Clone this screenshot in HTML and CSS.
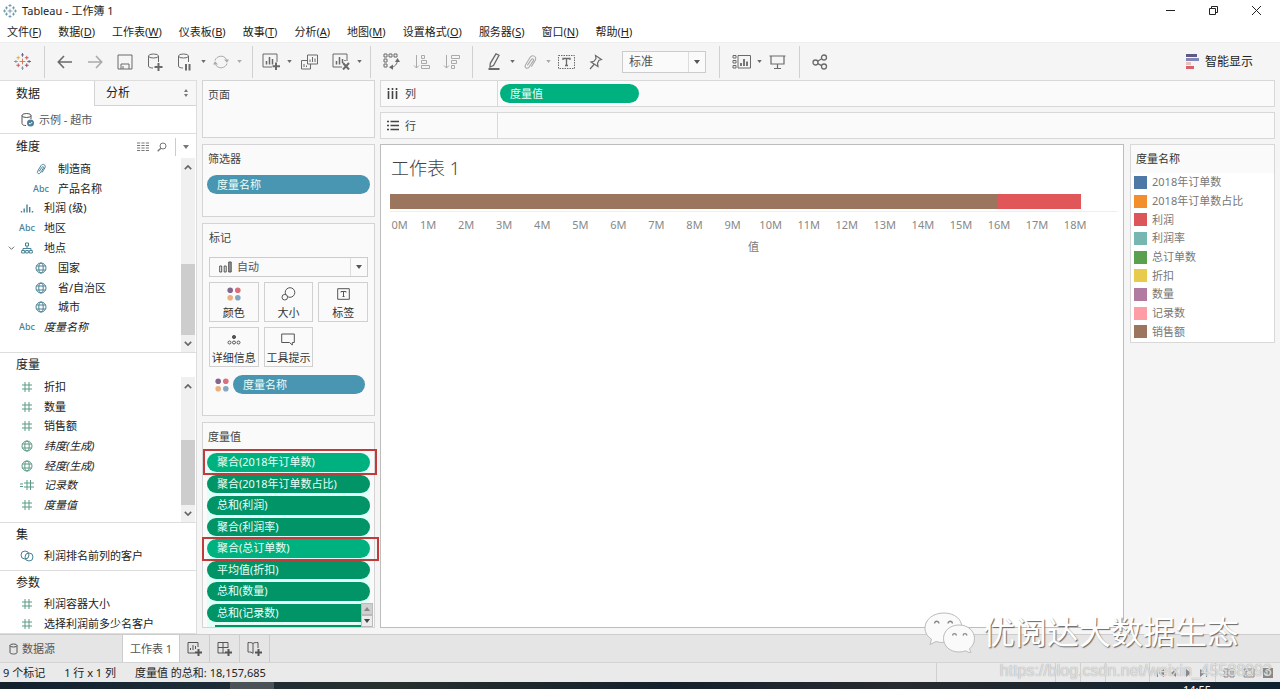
FILE: index.html
```html
<!DOCTYPE html>
<html lang="zh-CN">
<head>
<meta charset="utf-8">
<meta name="viewport" content="width=device-width, initial-scale=1">
<title>Tableau - 工作簿 1</title>
<link rel="stylesheet" href="styles.css">
</head>
<body>
<svg class="defs" aria-hidden="true">
  <symbol id="i-hash" viewBox="0 0 12 12"><path d="M4 1v10M8 1v10M1 4h10M1 8h10"/></symbol>
  <symbol id="i-globe" viewBox="0 0 12 12"><circle cx="6" cy="6" r="5"/><ellipse cx="6" cy="6" rx="2.2" ry="5"/><path d="M1.5 4h9M1.5 8h9"/></symbol>
  <symbol id="i-clip" viewBox="0 0 12 12"><path d="M4 8.500 7 4.200c.8-1.200 2.200-.4 1.500.8L5.300 9.800c-1.400 1.900-3.800.4-2.600-1.700L6 2.600C7.700 0 11.300 1.800 9.900 4.800L7 9.500"/></symbol>
  <symbol id="i-bars" viewBox="0 0 12 12"><path d="M.5 9v1.500M3.200 6.500v4M6 2.500v8M8.700 5v5.500M11.500 9v1.500" stroke-width="1.400"/></symbol>
  <symbol id="i-tree" viewBox="0 0 12 12"><path d="M4.500 1h3v3h-3zM6 4v2.500M2 8.500v-2h8v2M.7 8.500h3V11h-3zM4.700 8.500h2.600V11H4.700zM8.300 8.500h3V11h-3z"/></symbol>
  <symbol id="i-venn" viewBox="0 0 14 12"><circle cx="5" cy="5" r="4"/><circle cx="9" cy="7" r="4"/></symbol>
  <symbol id="i-eqhash" viewBox="0 0 14 12"><path d="M0 5h3M0 7.500h3M7 1v10M10.500 1v10M4 4h10M4 8h10"/></symbol>
  <symbol id="i-chev" viewBox="0 0 10 6"><path d="M1 1l4 4 4-4"/></symbol>
  <symbol id="i-caret" viewBox="0 0 6 4"><path class="solid" d="M0 0h6L3 4z"/></symbol>
  <symbol id="i-dots" viewBox="0 0 14 14"><circle cx="3.200" cy="3.200" r="2.800" fill="#83668e"/><circle cx="10.800" cy="3.200" r="2.800" fill="#d9707c"/><circle cx="3.200" cy="10.800" r="2.800" fill="#ecb07e"/><circle cx="10.800" cy="10.800" r="2.800" fill="#86a7bf"/></symbol>
  <symbol id="i-star" viewBox="0 0 18 18">
    <path d="M9 6v6M6 9h6M9 0v4M7 2h4M9 14v4M7 16h4M0 9h4M2 7v4M14 9h4M16 7v4M4.500 3v4M2.500 5h4M13.500 3v4M11.500 5h4M4.500 11v4M2.500 13h4M13.500 11v4M11.500 13h4"/></symbol>
</svg>

<div class="app">
  <header class="titlebar">
    <svg class="app-icon ico" viewBox="0 0 18 18"><use href="#i-star"/></svg>
    <h1>Tableau - 工作簿 1</h1>
    <div class="window-controls">
      <button aria-label="最小化"><svg class="ico" width="11" height="11" viewBox="0 0 11 11"><path d="M1 5.500h9"/></svg></button>
      <button aria-label="还原"><svg class="ico" width="11" height="11" viewBox="0 0 11 11"><path d="M1.500 3.500h6v6h-6zM3.500 3.500v-2h6v6h-2"/></svg></button>
      <button aria-label="关闭"><svg class="ico" width="11" height="11" viewBox="0 0 11 11"><path d="M1 1l9 9M10 1l-9 9"/></svg></button>
    </div>
  </header>

  <nav class="menubar">
    <button>文件(<u>F</u>)</button><button>数据(<u>D</u>)</button><button>工作表(<u>W</u>)</button><button>仪表板(<u>B</u>)</button><button>故事(<u>T</u>)</button><button>分析(<u>A</u>)</button><button>地图(<u>M</u>)</button><button>设置格式(<u>O</u>)</button><button>服务器(<u>S</u>)</button><button>窗口(<u>N</u>)</button><button>帮助(<u>H</u>)</button>
  </nav>

  <div class="toolbar">
    <div class="group group-logo">
      <button class="tool" aria-label="起始页"><svg class="ico" width="17" height="17" viewBox="0 0 18 18">
        <path stroke="#d9744f" d="M9 6v6M6 9h6"/><path stroke="#5b6591" d="M9 0v4M7.500 2h3M14 9h4M16 7.500v3"/><path stroke="#7d98a6" d="M9 14v4M7.500 16h3M0 9h4M2 7.500v3"/><path stroke="#e0b04e" d="M4.500 3v4M2.500 5h4"/><path stroke="#c9525b" d="M4.500 11v4M2.500 13h4M13.500 3v4M11.500 5h4"/><path stroke="#8a4a68" d="M13.500 11v4M11.500 13h4"/></svg></button>
    </div>
    <div class="group group-file">
      <button class="tool" aria-label="撤消"><svg class="ico bold" width="16" height="14" viewBox="0 0 16 14"><path d="M15 7H1.500M7 1L1.300 7 7 13"/></svg></button>
      <button class="tool dim" aria-label="重做"><svg class="ico bold" width="16" height="14" viewBox="0 0 16 14"><path d="M1 7h13.500M9 1l5.700 6L9 13"/></svg></button>
      <button class="tool" aria-label="保存"><svg class="ico" width="16" height="16" viewBox="0 0 16 16"><path d="M1 1h14v14H1zM4 15v-5h8v5M6 12v3"/></svg></button>
      <button class="tool" aria-label="新建数据源"><svg class="ico" width="16" height="18" viewBox="0 0 16 18"><ellipse cx="6.500" cy="3" rx="5" ry="2"/><path d="M1.500 3v10c0 1.400 2 2 4.500 2M11.500 3v6"/><path class="heavy" d="M11.500 10v8M7.500 14h8"/></svg></button>
      <button class="tool" aria-label="暂停自动更新"><svg class="ico" width="16" height="18" viewBox="0 0 16 18"><ellipse cx="6.500" cy="3" rx="5" ry="2"/><path d="M1.500 3v10c0 1.400 2 2 4.500 2M11.500 3v6"/><path class="heavy" d="M9 11v6.500M12.500 11v6.500"/></svg></button>
      <button class="drop" aria-label="更新选项"><svg class="ico" width="5" height="3"><use href="#i-caret"/></svg></button>
      <button class="tool dim" aria-label="刷新"><svg class="ico" width="16" height="16" viewBox="0 0 16 16"><path d="M2 6.500C3.500 1.500 11 .5 13.500 5.500M14 9.500C12.500 14.500 5 15.500 2.500 10.500"/><path class="solid" d="M11 5.500h5l-2 3.300zM0 10.500h5L2 7.200z"/></svg></button>
      <button class="drop dim" aria-label="刷新选项"><svg class="ico" width="5" height="3"><use href="#i-caret"/></svg></button>
    </div>
    <div class="group group-sheets">
      <button class="tool" aria-label="新建工作表"><svg class="ico" width="18" height="17" viewBox="0 0 18 17"><path d="M15 9V1H1v13h9"/><path d="M4.500 11.500V8M7.500 11.500V4M10.500 11.500V6" stroke-width="1.500"/><path class="heavy" d="M14 9.500v7.500M10.500 13.200h7.500"/></svg></button>
      <button class="drop" aria-label="新建选项"><svg class="ico" width="5" height="3"><use href="#i-caret"/></svg></button>
      <button class="tool" aria-label="复制"><svg class="ico" width="17" height="16" viewBox="0 0 17 16"><path d="M6.500 1h10v9h-10zM6.500 6.500h-6V15h9v-5M9 8V5.500M11.500 8V3M14 8V4.500M3 13v-3M5.500 13v-1.500"/></svg></button>
      <button class="tool" aria-label="清除"><svg class="ico" width="18" height="17" viewBox="0 0 18 17"><path d="M15 8V1H1v13h9"/><path d="M4.500 11.500V8M7.500 11.500V4M10.500 10V6M13 8V7" stroke-width="1.500"/><path class="heavy" d="M11 10l6 6.500M17 10l-6 6.500"/></svg></button>
      <button class="drop" aria-label="清除选项"><svg class="ico" width="5" height="3"><use href="#i-caret"/></svg></button>
    </div>
    <div class="group">
      <button class="tool" aria-label="交换行和列"><svg class="ico" width="17" height="17" viewBox="0 0 17 17"><path d="M1 1h3v3H1zM6 1h3v3H6zM11 1h3v3h-3zM1 6h3v3H1zM1 11h3v3H1zM14.500 7c0 4-3 7-6.500 7.500"/><path class="solid" d="M12 9l2.500-4L17 9zM10 11.500l-4 2.700 4 2.500z"/></svg></button>
      <button class="tool dim" aria-label="升序排序"><svg class="ico" width="17" height="16" viewBox="0 0 17 16"><path d="M3.500 1v13M1 11.500L3.500 14 6 11.500M8.500 1.500h3v3h-3zM8.500 6.500h5v3h-5zM8.500 11.500h8v3h-8z"/></svg></button>
      <button class="tool dim" aria-label="降序排序"><svg class="ico" width="17" height="16" viewBox="0 0 17 16"><path d="M3.500 1v13M1 11.500L3.500 14 6 11.500M8.500 1.500h8v3h-8zM8.500 6.500h5v3h-5zM8.500 11.500h3v3h-3z"/></svg></button>
    </div>
    <div class="group group-format">
      <button class="tool" aria-label="突出显示"><svg class="ico" width="14" height="17" viewBox="0 0 14 17"><path d="M9 .8l3 1.400-5.500 10.300L3 14l.3-3.700z" stroke-width="1.300"/><path class="heavy" d="M1.500 16h11"/></svg></button>
      <button class="drop" aria-label="突出显示选项"><svg class="ico" width="5" height="3"><use href="#i-caret"/></svg></button>
      <button class="tool dim" aria-label="分组成员"><svg class="ico thin" width="16" height="16"><use href="#i-clip"/></svg></button>
      <button class="drop dim" aria-label="分组选项"><svg class="ico" width="5" height="3"><use href="#i-caret"/></svg></button>
      <button class="tool" aria-label="显示标记标签"><svg class="ico" width="17" height="16" viewBox="0 0 17 16"><path d="M.5 1.500h16v13H.5z" stroke-dasharray="1.500 1"/><path d="M5 6V4.500h7V6M8.500 4.500v7M7 11.500h3" stroke-width="1.300"/></svg></button>
      <button class="tool" aria-label="固定轴"><svg class="ico" width="14" height="16" viewBox="0 0 14 16"><path d="M6.500 1.500l6 4-2.500.8-1.500 3 .5 3.200L2 8l3-.7 2-2.800zM5 10.500L1 15" stroke-width="1.200"/></svg></button>
      <label class="select fit"><select aria-label="适合"><option>标准</option></select><svg class="ico" width="6" height="4"><use href="#i-caret"/></svg></label>
    </div>
    <div class="group group-show">
      <button class="tool" aria-label="显示或隐藏功能区"><svg class="ico" width="19" height="16" viewBox="0 0 19 16"><path d="M1 1.500h3v2.500H1zM1 6.500h3V9H1zM1 11.500h3V14H1zM6 1.500h12.500V14H6z"/><path d="M9 12V9M12 12V5M15 12V7.500" stroke-width="1.800"/></svg></button>
      <button class="drop" aria-label="功能区选项"><svg class="ico" width="5" height="3"><use href="#i-caret"/></svg></button>
      <button class="tool" aria-label="演示模式"><svg class="ico" width="17" height="16" viewBox="0 0 17 16"><path d="M.5 2h16M2 2v8h13V2M8.500 10v4.500M5 14.500h7" stroke-width="1.200"/></svg></button>
    </div>
    <div class="group group-last">
      <button class="tool" aria-label="共享"><svg class="ico" width="16" height="16" viewBox="0 0 16 16"><g stroke-width="1.300"><circle cx="3.500" cy="8.500" r="2.500"/><circle cx="12" cy="3.500" r="2.500"/><circle cx="12" cy="12.500" r="2.500"/><path d="M5.700 7.200l4-2.400M5.700 9.700l4 2"/></g></svg></button>
    </div>
    <button class="show-me"><svg width="14" height="15" viewBox="0 0 14 15"><path fill="#5f5a85" d="M0 0h11v3H0z"/><path fill="#8387b8" d="M0 4h13v3H0z"/><path fill="#eec0bd" d="M0 8h5v3H0z"/><path fill="#d8606b" d="M0 12h8v3H0z"/></svg>智能显示</button>
  </div>

  <main class="workspace">
    <aside class="sidebar">
      <div class="side-tabs">
        <button class="side-tab active">数据</button>
        <button class="side-tab">分析<svg class="ico" width="6" height="8" viewBox="0 0 6 8"><path class="solid" d="M1 3h4L3 0zM1 5h4L3 8z"/></svg></button>
      </div>
      <a href="#" class="source"><svg class="ico" width="13" height="14" viewBox="0 0 13 14"><ellipse cx="5.500" cy="2.500" rx="4.500" ry="2"/><path d="M1 2.500v8c0 1.500 2 2 4 2M10 2.500V6"/><circle cx="9.500" cy="10" r="3.500" fill="#4f7f9b" stroke="none"/><path stroke="#fff" d="M8 10l1.200 1.200L11.200 9"/></svg>示例 - 超市</a>

      <section class="panel dims">
        <header><h2>维度</h2>
          <button aria-label="查看数据"><svg class="ico" width="12" height="10" viewBox="0 0 12 10"><path d="M0 1h12M0 3.500h12M0 6h12M0 8.500h12" stroke-dasharray="3.200 1.200"/></svg></button>
          <button aria-label="查找字段"><svg class="ico" width="10" height="10" viewBox="0 0 10 10"><circle cx="6" cy="4" r="3"/><path d="M3.800 6.200L.7 9.300" stroke-width="1.400"/></svg></button>
          <button class="more" aria-label="维度菜单"><svg class="ico" width="6" height="4"><use href="#i-caret"/></svg></button>
        </header>
        <div class="scroll">
          <ul>
            <li class="child"><svg class="ico" width="12" height="12"><use href="#i-clip"/></svg>制造商</li>
            <li class="child"><b>Abc</b>产品名称</li>
            <li><svg class="ico" width="12" height="12"><use href="#i-bars"/></svg>利润 (级)</li>
            <li><b>Abc</b>地区</li>
            <li><button class="twist" aria-label="折叠"><svg class="ico" width="7" height="4"><use href="#i-chev"/></svg></button><svg class="ico" width="12" height="12"><use href="#i-tree"/></svg>地点</li>
            <li class="child"><svg class="ico" width="12" height="12"><use href="#i-globe"/></svg>国家</li>
            <li class="child"><svg class="ico" width="12" height="12"><use href="#i-globe"/></svg>省/自治区</li>
            <li class="child"><svg class="ico" width="12" height="12"><use href="#i-globe"/></svg>城市</li>
            <li><b>Abc</b><i>度量名称</i></li>
          </ul>
          <div class="bar"><svg class="ico up" width="8" height="5"><use href="#i-chev"/></svg><span class="thumb"></span><svg class="ico" width="8" height="5"><use href="#i-chev"/></svg></div>
        </div>
      </section>

      <section class="panel meas">
        <header><h2>度量</h2></header>
        <div class="scroll">
          <ul>
            <li><svg class="ico" width="12" height="12"><use href="#i-hash"/></svg>折扣</li>
            <li><svg class="ico" width="12" height="12"><use href="#i-hash"/></svg>数量</li>
            <li><svg class="ico" width="12" height="12"><use href="#i-hash"/></svg>销售额</li>
            <li><svg class="ico" width="12" height="12"><use href="#i-globe"/></svg><i>纬度(生成)</i></li>
            <li><svg class="ico" width="12" height="12"><use href="#i-globe"/></svg><i>经度(生成)</i></li>
            <li><svg class="ico" width="14" height="12"><use href="#i-eqhash"/></svg><i>记录数</i></li>
            <li><svg class="ico" width="12" height="12"><use href="#i-hash"/></svg><i>度量值</i></li>
          </ul>
          <div class="bar"><svg class="ico up" width="8" height="5"><use href="#i-chev"/></svg><span class="thumb"></span><svg class="ico" width="8" height="5"><use href="#i-chev"/></svg></div>
        </div>
      </section>

      <section class="panel sets">
        <header><h2>集</h2></header>
        <ul><li><svg class="ico" width="14" height="12"><use href="#i-venn"/></svg>利润排名前列的客户</li></ul>
      </section>

      <section class="panel params">
        <header><h2>参数</h2></header>
        <ul>
          <li><svg class="ico" width="12" height="12"><use href="#i-hash"/></svg>利润容器大小</li>
          <li><svg class="ico" width="12" height="12"><use href="#i-hash"/></svg>选择利润前多少名客户</li>
        </ul>
      </section>
    </aside>

    <div class="cards">
      <section class="card pages"><h2>页面</h2></section>
      <section class="card filters"><h2>筛选器</h2><button class="pill blue">度量名称</button></section>
      <section class="card marks"><h2>标记</h2>
        <label class="select mark-type">
          <svg class="ico" width="13" height="12" viewBox="0 0 13 12"><path d="M.7 5h2v6h-2zM5.200 5h2v6h-2z"/><path d="M9.700 1h2.500v10H9.700z" fill="#999"/></svg>
          <select aria-label="标记类型"><option>自动</option></select><svg class="ico" width="6" height="4"><use href="#i-caret"/></svg></label>
        <div class="mark-grid">
          <button><svg width="14" height="14"><use href="#i-dots"/></svg>颜色</button>
          <button><svg class="ico" width="15" height="14" viewBox="0 0 15 14"><circle cx="9" cy="5.500" r="4.800"/><circle cx="3.800" cy="10.200" r="2.800" fill="#fafafa"/></svg>大小</button>
          <button><svg class="ico" width="13" height="14" viewBox="0 0 13 14"><path d="M.7 1.700h11.600v10.600H.7z"/><path d="M4 5.500v-1h5v1M6.500 4.500v5M5.500 9.500h2"/></svg>标签</button>
          <button><svg class="ico" width="14" height="14" viewBox="0 0 14 14"><circle cx="7" cy="5" r="1.600" fill="#555"/><circle cx="2.500" cy="10.500" r="1.500"/><circle cx="7" cy="10.500" r="1.500"/><circle cx="11.500" cy="10.500" r="1.500"/></svg>详细信息</button>
          <button><svg class="ico" width="14" height="14" viewBox="0 0 14 14"><path d="M.7 2h12.600v8.500h-2V13L8.500 10.500H.7z"/></svg>工具提示</button>
        </div>
        <div class="encoding"><svg width="14" height="14"><use href="#i-dots"/></svg><button class="pill blue">度量名称</button></div>
      </section>
      <section class="card values"><h2>度量值</h2>
        <ul>
          <li class="noted"><button class="pill bright">聚合(2018年订单数)</button></li>
          <li><button class="pill">聚合(2018年订单数占比)</button></li>
          <li><button class="pill">总和(利润)</button></li>
          <li><button class="pill">聚合(利润率)</button></li>
          <li class="noted wide"><button class="pill bright">聚合(总订单数)</button></li>
          <li><button class="pill">平均值(折扣)</button></li>
          <li><button class="pill">总和(数量)</button></li>
          <li><button class="pill">总和(记录数)</button></li>
          <li class="cut"></li>
        </ul>
        <div class="spinner"><button class="up dim" aria-label="向上"><svg class="ico" width="6" height="4"><use href="#i-caret"/></svg></button><button aria-label="向下"><svg class="ico" width="6" height="4"><use href="#i-caret"/></svg></button></div>
      </section>
    </div>

    <div class="stage">
      <div class="shelf"><div class="shelf-name"><svg class="ico" width="12" height="13" viewBox="0 0 12 13"><path d="M1.500 1v2M5.500 1v2M9.500 1v2M1.500 4v8M5.500 4v8M9.500 4v8" stroke-width="1.600"/></svg>列</div><button class="pill bright">度量值</button></div>
      <div class="shelf"><div class="shelf-name"><svg class="ico" width="12" height="11" viewBox="0 0 12 11"><path d="M0 1.500h2M3.500 1.500H12M0 5.500h2M3.500 5.500H12M0 9.500h2M3.500 9.500H12" stroke-width="1.600"/></svg>行</div></div>
      <div class="view-row">
        <section class="view">
          <h2>工作表 1</h2>
          <div class="plot"><span class="sales" style="width:83.700%"></span><span class="profit" style="width:11.400%"></span></div>
          <div class="axis"><span>0M</span><span>1M</span><span>2M</span><span>3M</span><span>4M</span><span>5M</span><span>6M</span><span>7M</span><span>8M</span><span>9M</span><span>10M</span><span>11M</span><span>12M</span><span>13M</span><span>14M</span><span>15M</span><span>16M</span><span>17M</span><span>18M</span></div>
          <p>值</p>
        </section>
        <section class="legend">
          <h2>度量名称</h2>
          <ul>
            <li class="c1">2018年订单数</li><li class="c2">2018年订单数占比</li><li class="c3">利润</li><li class="c4">利润率</li><li class="c5">总订单数</li><li class="c6">折扣</li><li class="c7">数量</li><li class="c8">记录数</li><li class="c9">销售额</li>
          </ul>
        </section>
      </div>
    </div>
  </main>

  <nav class="sheet-tabs">
    <button class="data-source"><svg class="ico" width="9" height="12" viewBox="0 0 9 12"><ellipse cx="4.500" cy="2.500" rx="3.500" ry="1.500"/><path d="M1 2.500v7c0 2 7 2 7 0v-7"/></svg>数据源</button>
    <button class="active">工作表 1</button>
    <button class="add" aria-label="新建工作表"><svg class="ico" width="15" height="15" viewBox="0 0 15 15"><path d="M11 6V1.500H1V12h7M3.500 9V7M6 9V4M8.500 8V5"/><path class="heavy" d="M11.500 8v7M8 11.500h7"/></svg></button>
    <button class="add" aria-label="新建仪表板"><svg class="ico" width="15" height="15" viewBox="0 0 15 15"><path d="M11 7V1.500H1V12h7M6 1.500V12M1 6.500h10"/><path class="heavy" d="M11.500 8v7M8 11.500h7"/></svg></button>
    <button class="add" aria-label="新建故事"><svg class="ico" width="15" height="15" viewBox="0 0 15 15"><path d="M6 2.500C5 1.500 3 1.500 1 1.500V11c2 0 4 0 5 1.500M6 2.500c1-1 3-1 5-1V7M6 2.500v10"/><path class="heavy" d="M11.500 8v7M8 11.500h7"/></svg></button>
  </nav>

  <footer class="status">
    <span>9 个标记</span><span>1 行 x 1 列</span><span>度量值 的总和: 18,157,685</span>
    <div class="status-right">
      <i class="cell w1"></i><i class="cell"></i><i class="cell"></i><i class="cell w2"></i>
      <div class="cell pager">
        <svg class="ico" width="50" height="8" viewBox="0 0 50 8"><path class="solid" d="M0 0h1v8H0zM7 0v8L2 4zM19 0v8l-5-4zM29 0v8l5-4zM43 0v8l5-4zM49 0h1v8h-1z"/></svg>
      </div>
      <div class="cell modes">
        <svg class="ico" width="12" height="10" viewBox="0 0 12 10"><path d="M1 1h4v3H1zM7 1h4v3H7zM1 6h4v3H1zM7 6h4v3H7z"/></svg>
        <svg class="ico" width="12" height="10" viewBox="0 0 12 10"><path d="M1 1h10v8H1zM3 3h6v4H3z"/></svg>
        <svg class="ico" width="10" height="10" viewBox="0 0 10 10"><path class="solid" d="M0 0h10v10H0z"/><path stroke="#eee" d="M2 3h2v4H2"/></svg>
      </div>
    </div>
  </footer>
  <div class="taskbar"><span class="task"></span><time>14:55</time></div>

  <div class="brand">
    <svg width="52" height="42" viewBox="0 0 52 42"><g fill="#fafafa" stroke="#bbb" stroke-width="1"><path d="M20 2C9 2 1 8.500 1 17c0 5 2.500 8.500 6.500 11.200L6 33.500l6-3c9 3 26-1 26-13.500C38 8.500 31 2 20 2z"/><path d="M35 14c-9 0-15.500 6-15.500 13.500S26 41 35 41c2.500 0 4.500-.4 6.500-1.200l5.500 2.500-1.500-4.500c3-2.500 5-6 5-10.300C50.500 20 44 14 35 14z"/></g><g fill="none" stroke="#888" stroke-width="1.300"><path d="M10.500 12.500c.5-3 4-3 4.500 0M24 12.500c.5-3 4-3 4.500 0M28.500 24.500c.5-2.500 3.500-2.500 4 0M39 24.500c.5-2.500 3.500-2.500 4 0"/></g></svg>
    <span>优阅达大数据生态</span>
  </div>
  <div class="blog-url">https://blog.csdn.net/weixin_45588993</div>
</div>
</body>
</html>
```

FILE: styles.css
```css
* { box-sizing: border-box; }
body {
  margin: 0;
  font: 11px/16px "Noto Sans", "Noto Sans CJK SC", sans-serif;
  color: #333;
  background: #f5f5f5;
}
h1, h2, p, ul { margin: 0; padding: 0; font-size: inherit; font-weight: 400; }
ul { list-style: none; }
button, select { font: inherit; color: inherit; background: none; border: 0; padding: 0; margin: 0; }
a { color: inherit; text-decoration: none; }
.defs { position: absolute; width: 0; height: 0; }
.ico { fill: none; stroke: currentColor; stroke-width: 1; flex: none; }
.ico .solid, .solid { fill: currentColor; stroke: none; }
.heavy { stroke-width: 2; }
.bold { stroke-width: 1.6; }
.thin { stroke-width: .8; }
.dim { color: #aaa; }
.up { transform: rotate(180deg); }

.app { position: relative; display: flex; flex-direction: column; height: 100vh; overflow: hidden; }

/* Title and menu */
.titlebar { display: flex; align-items: center; height: 21px; padding-left: 3px; background: #fff; color: #222; }
.titlebar h1 { flex: 1; }
.app-icon { width: 14px; height: 14px; margin-right: 5px; color: #5d8ba1; }
.window-controls { display: flex; padding-right: 2px; }
.window-controls button { display: grid; place-items: center; width: 43px; height: 20px; }
.menubar { display: flex; gap: 17px; height: 21px; padding: 1px 7px 0; background: #fff; color: #222; }

/* Toolbar */
.toolbar { display: flex; align-items: center; height: 38px; color: #6a6a6a; border-top: 1px solid #eee; }
.group { display: flex; align-items: center; gap: 2px; height: 32px; padding: 0 7px 0 6px; border-right: 1px solid #d0d0d0; }
.group-logo { padding: 0 8px; }
.group-file { padding-right: 11px; }
.group-sheets { gap: 4px; padding: 0 9px 0 4px; }
.group-format { padding-left: 7px; padding-right: 13px; }
.group-show { padding-left: 7px; padding-right: 8px; }
.group-last { border: 0; }
.tool { display: grid; place-items: center; width: 28px; height: 28px; }
.drop { display: grid; place-items: center; width: 8px; height: 28px; margin-left: -2px; margin-right: -2px; }
.group-sheets .drop { margin: 0 -2px 0 -4px; }
.select { display: flex; align-items: center; background: #fafafa; border: 1px solid #ccc; color: #555; }
.select select { flex: 1; min-width: 0; height: 100%; appearance: none; outline: 0; }
.select select + .ico { width: 17px; height: 100%; padding: 0 5px; border-left: 1px solid #ddd; overflow: visible; }
.fit { width: 84px; height: 22px; margin-left: 10px; padding-left: 6px; font-size: 12px; }
.show-me { display: flex; align-items: center; gap: 5px; margin-left: auto; margin-right: 27px; font-size: 12px; color: #222; }

/* Workspace */
.workspace { display: flex; flex: 1; min-height: 0; gap: 5px; padding: 0 5px 0 0; }

.sidebar { flex: none; width: 197px; overflow: hidden; background: #fff; border: 1px solid #ddd; border-left: 0; }
.side-tabs { display: grid; grid-template-columns: 94px 1fr; height: 25px; font-size: 12px; color: #222; }
.side-tab { display: flex; align-items: center; justify-content: space-between; padding: 0 7px 0 11px; }
.side-tab.active { padding-left: 16px; }
.side-tab:not(.active) { background: #f7f7f7; border: 1px solid #d4d4d4; border-width: 0 0 1px 1px; }
.side-tab .ico { color: #777; }
.source { display: flex; align-items: center; gap: 5px; height: 28px; padding-left: 21px; color: #555; border-bottom: 1px solid #ddd; }
.panel { border-bottom: 1px solid #ddd; }
.panel header { display: flex; align-items: center; gap: 8px; height: 24px; padding-left: 16px; font-size: 12px; color: #222; }
.panel h2 { flex: 1; }
.panel header button { display: grid; place-items: center; color: #777; }
.panel header .more { width: 21px; height: 18px; border-left: 1px solid #ccc; }
.panel li { position: relative; display: flex; align-items: center; flex: 1; height: 20px; padding-left: 44px; white-space: nowrap; color: #222; }
.panel li > .ico, .panel li > b { width: 16px; margin-left: -25px; margin-right: 9px; color: #4a8296; }
.panel li > b { font: 9px/16px "Noto Sans", sans-serif; font-weight: 500; text-align: center; }
.panel li.child { padding-left: 58px; }
.meas li > .ico, .params li > .ico { color: #5b9a84; }
.twist { position: absolute; left: 6px; top: 0; height: 100%; width: 10px; display: grid; place-items: center; }
.scroll { display: flex; }
.scroll ul { display: flex; flex: 1; flex-direction: column; }
.dims header { padding-top: 1px; }
.dims ul { height: 179px; padding-top: 1px; }
.meas ul { height: 138px; }
.dims .scroll { height: 194px; }
.meas .scroll { height: 145px; }
.bar { display: flex; flex-direction: column; align-items: center; justify-content: flex-end; gap: 6px; width: 14px; margin-right: 1px; padding: 7px 0 6px; background: #f0f0f0; color: #666; }
.bar .ico { stroke-width: 2; }
.bar .up { margin-bottom: auto; }
.thumb { width: 100%; height: 71px; background: #cdcdcd; }
.meas .thumb { height: 65px; }
.sets { height: 48px; }
.sets header, .params header { height: 23px; }

/* Cards */
.cards { display: flex; flex: none; flex-direction: column; gap: 6px; width: 173px; padding-bottom: 6px; }
.card { position: relative; background: #fafafa; border: 1px solid #d4d4d4; padding: 6px 4px 5px; color: #444; }
.card h2 { padding-left: 1px; }
.pages { height: 58px; }
.filters { height: 73px; }
.marks { height: 193px; padding-left: 6px; padding-right: 6px; }
.marks h2 { padding-left: 0; }
.pill { display: flex; align-items: center; width: 100%; height: 19px; padding-left: 10px; border-radius: 10px; background: #009467; color: #eafff8; white-space: nowrap; }
.pill.blue { background: #4996b2; }
.pill.bright { background: #00b180; }
.filters .pill { margin-top: 8px; }
.mark-type { height: 20px; margin-top: 11px; padding-left: 9px; gap: 5px; }
.mark-grid { display: grid; grid-template-columns: repeat(3, 1fr); gap: 5px; margin-top: 5px; }
.mark-grid button { display: flex; flex-direction: column; align-items: center; gap: 4px; height: 40px; padding-top: 4px; border: 1px solid #d0d0d0; white-space: nowrap; color: #333; }
.mark-grid button .ico { color: #555; }
.encoding { display: flex; align-items: center; gap: 4px; margin-top: 8px; padding: 0 3px 0 6px; }
.encoding > svg { flex: none; }
.values { display: flex; flex: 1; flex-direction: column; min-height: 0; padding-bottom: 0; }
.values ul { display: flex; flex: 1; flex-direction: column; gap: 3px; margin-top: 8px; background: #e2fff7; }
.values li { position: relative; flex: 1; }
.values li .pill { height: 100%; }
.values .cut { flex: none; height: 2px; margin: 0 8px; background: #009467; }
.noted::after { content: ""; position: absolute; z-index: 1; inset: -4px -7px -3px -4px; border: 2px solid #c23b3b; }
.noted.wide::after { inset: -2px -9px -3px -5px; }
.spinner { position: absolute; right: 1px; bottom: 0; display: grid; width: 12px; height: 24px; }
.spinner button { display: grid; place-items: center; background: #ececec; border: 1px solid #bbb; }
.spinner .dim { background: #d0d0d0; color: #888; }

/* Shelves, view, legend */
.stage { display: flex; flex: 1; flex-direction: column; gap: 5px; min-width: 0; padding-bottom: 6px; }
.shelf { display: flex; align-items: center; flex: none; height: 27px; background: #fafafa; border: 1px solid #d8d8d8; color: #444; }
.shelf-name { display: flex; align-items: center; gap: 6px; width: 117px; height: 100%; padding-left: 6px; border-right: 1px solid #d8d8d8; }
.shelf .pill { width: 139px; margin-left: 2px; }
.view-row { display: flex; align-items: flex-start; flex: 1; gap: 6px; min-height: 0; }
.view { flex: 1; min-width: 0; height: 100%; padding: 10px 6px 0 9px; background: #fff; border: 1px solid #bdbdbd; }
.view h2 { padding-left: 1px; font-size: 18px; line-height: 26px; font-weight: 300; color: #444; }
.plot { display: flex; height: 18px; margin-top: 13px; padding-bottom: 2px; border-bottom: 1px solid #eee; }
.sales { background: #9c755f; }
.profit { background: #e15759; }
.axis { display: flex; margin-top: 5px; color: #888; }
.axis span { flex: 1 1 0; min-width: 0; text-align: center; }
.axis span:first-child { flex-grow: .5; }
.axis::after { content: ""; flex: .6 1 0; }
.view p { margin-top: 6px; text-align: center; color: #777; }
.legend { flex: none; width: 145px; background: #fff; border: 1px solid #d8d8d8; }
.legend h2 { height: 28px; padding: 6px 5px 0; background: #fafafa; color: #333; }
.legend ul { display: flex; flex-direction: column; height: 169px; padding: 0 3px 1px; }
.legend li { display: flex; flex: 1; align-items: center; gap: 5px; color: #777; }
.legend li::before { content: ""; width: 13px; height: 13px; background: var(--c); }
.c1 { --c: #4e79a7; } .c2 { --c: #f28e2b; } .c3 { --c: #dc5558; }
.c4 { --c: #76b7b2; } .c5 { --c: #59a14f; } .c6 { --c: #e8ca4c; }
.c7 { --c: #b07aa1; } .c8 { --c: #ff9da7; } .c9 { --c: #9c755f; }

/* Bottom bars */
.sheet-tabs { display: flex; height: 28px; background: #e5e5e5; border-top: 1px solid #ccc; color: #555; }
.sheet-tabs button { display: flex; align-items: center; justify-content: center; border-right: 1px solid #ccc; }
.sheet-tabs .data-source { justify-content: flex-start; gap: 4px; width: 123px; padding-left: 9px; }
.sheet-tabs .active { width: 57px; background: #fff; }
.sheet-tabs .add { width: 30px; }
.status { display: flex; align-items: center; gap: 19px; height: 20px; padding-left: 3px; background: #eaeaea; border-top: 1px solid #d4d4d4; color: #222; }
.status-right { display: flex; align-self: stretch; margin-left: auto; color: #888; }
.cell { display: flex; align-items: center; width: 25px; border-left: 1px solid #d0d0d0; }
.w1 { width: 119px; }
.w2 { width: 44px; }
.pager { width: 66px; padding-left: 7px; }
.modes { width: 65px; gap: 8px; padding-left: 7px; }
.taskbar { display: flex; justify-content: space-between; height: 7px; overflow: hidden; background: linear-gradient(90deg, #11202c, #1b2b38 15%, #27302f 30%, #14202b 52%, #272b30 70%, #10222f); color: #fff; }
.task { width: 44px; margin-left: 230px; background: #4b5359; }
.taskbar time { margin-right: 69px; }

/* Watermarks */
.brand { position: absolute; right: 41px; bottom: 33px; display: flex; align-items: center; gap: 7px; font-size: 32px; line-height: 48px; color: #fff; text-shadow: 1px 1px 1px #666; pointer-events: none; }
.blog-url { position: absolute; right: 8px; bottom: 8px; font: 16px/20px "Liberation Sans", sans-serif; color: #f2f2f2cc; text-shadow: 0 0 1px #888; pointer-events: none; }
```
